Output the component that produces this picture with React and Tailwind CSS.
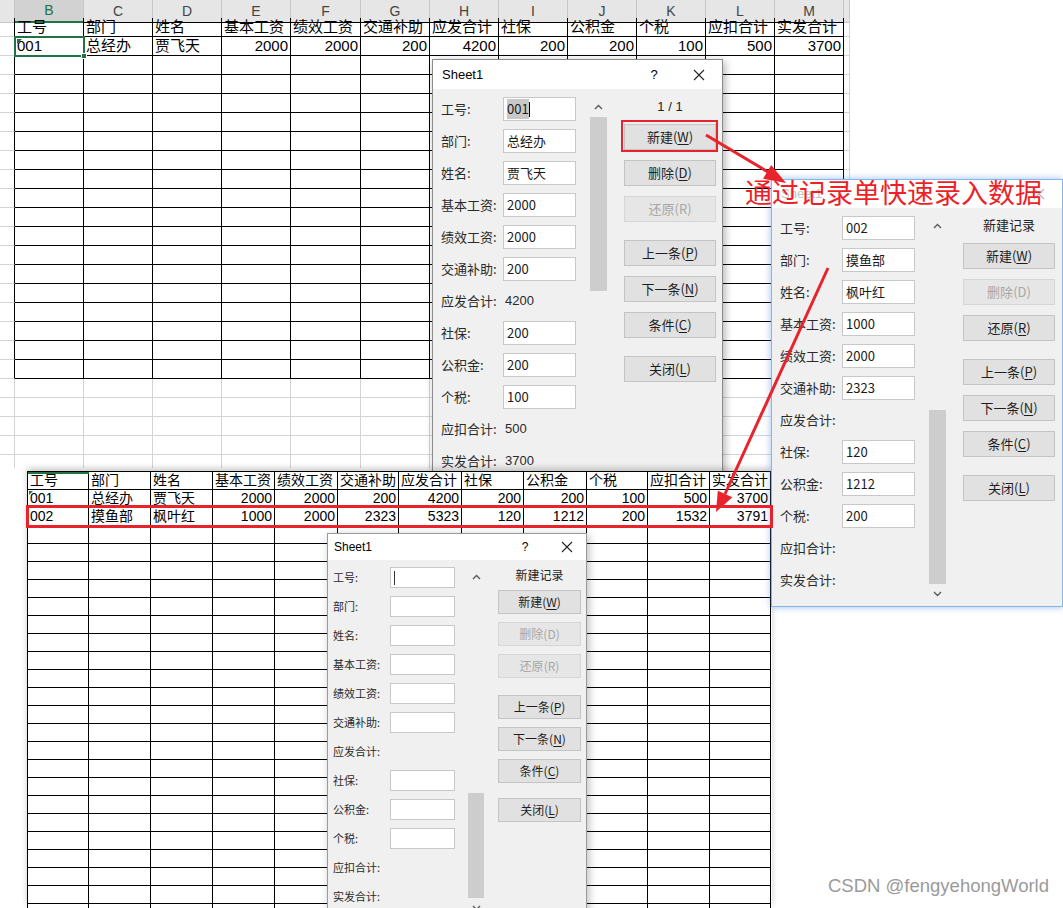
import React from 'react';

const SANS = "font-[family-name:'Liberation_Sans','Noto_Sans_CJK_SC',sans-serif]";
const CJK = "font-[family-name:'Noto_Sans_CJK_SC',sans-serif]";

const topCols = ['B', 'C', 'D', 'E', 'F', 'G', 'H', 'I', 'J', 'K', 'L', 'M'];
const heads = ['工号', '部门', '姓名', '基本工资', '绩效工资', '交通补助', '应发合计', '社保', '公积金', '个税', '应扣合计', '实发合计'];
const rec1 = ['001', '总经办', '贾飞天', '2000', '2000', '200', '4200', '200', '200', '100', '500', '3700'];
const rec2 = ['002', '摸鱼部', '枫叶红', '1000', '2000', '2323', '5323', '120', '1212', '200', '1532', '3791'];
const empty = ['', '', '', '', '', '', '', '', '', '', '', ''];

const TOP_GRID = 'grid grid-cols-[15px_69px_69px_69px_69px_70px_69px_69px_69px_69px_69px_69px_69px_6px]';
const BOT_GRID = 'grid grid-cols-[61px_62px_62px_62px_63px_61px_63px_62px_63px_61px_62px_61px]';

const calc = [6, 10, 11];
const buttons = [['新建', 'W'], ['删除', 'D'], ['还原', 'R'], ['上一条', 'P'], ['下一条', 'N'], ['条件', 'C'], ['关闭', 'L']];
const gapsLg = ['mt-[7px]', 'mt-[10px]', 'mt-[10px]', 'mt-[18px]', 'mt-[10px]', 'mt-[10px]', 'mt-[18px]'];
const gapsSm = ['mt-[5px]', 'mt-[8px]', 'mt-[8px]', 'mt-[17px]', 'mt-[8px]', 'mt-[8px]', 'mt-[15px]'];

function TopSheet() {
  return (
    <div className={`absolute left-0 top-0 w-[850px] h-[468px] overflow-hidden bg-white text-[15px] text-black ${SANS}`}>
      <div className={`${TOP_GRID} h-[18px] text-[14px] text-[#444]`}>
        <div className="bg-[#e6e6e6] border-r border-b border-[#c6c6c6]" />
        {topCols.map((c, i) => (
          <div
            key={c}
            className={i === 0
              ? 'flex items-center justify-center bg-[#d2d2d2] border-r border-[#c6c6c6] border-b-2 border-b-[#217346] text-[#217346]'
              : 'flex items-center justify-center bg-[#e6e6e6] border-r border-[#c6c6c6] border-b border-b-black'}
          >
            {c}
          </div>
        ))}
        <div className="bg-[#e6e6e6] border-b border-r border-[#c6c6c6]" />
      </div>
      {Array.from({ length: 24 }, (_, r) => {
        const boxed = r < 19;
        const vals = r === 0 ? heads : r === 1 ? rec1 : empty;
        return (
          <div key={r} className={`${TOP_GRID} h-[19px]`}>
            <div className={boxed ? 'border-b border-b-[#d4d4d4] border-r border-r-black' : 'border-b border-r border-[#d4d4d4]'} />
            {topCols.map((c, i) => (
              <div
                key={c}
                className={`flex items-center overflow-hidden whitespace-nowrap px-[2px] border-r border-b ${boxed ? 'border-black' : 'border-[#d4d4d4]'} ${r === 1 && i > 2 ? 'justify-end' : ''}`}
              >
                {vals[i]}
              </div>
            ))}
            <div className="border-b border-r border-[#d4d4d4]" />
          </div>
        );
      })}
      {/* active cell B2 */}
      <div className="absolute left-[14px] top-[36px] w-[71px] h-[21px] border-2 border-[#217346]">
        <div className="absolute -right-[4px] -bottom-[4px] w-[6px] h-[6px] bg-[#217346] border border-white" />
      </div>
      <div className="absolute left-[17px] top-[39px] w-0 h-0 border-t-[5px] border-r-[5px] border-t-[#217346] border-r-transparent" />
    </div>
  );
}

function BottomSheet() {
  return (
    <div className={`absolute left-[27px] top-[471px] w-[745px] h-[437px] overflow-hidden bg-white border-l border-t border-black shadow-[0_-3px_6px_rgba(0,0,0,0.2)] text-[14px] text-black ${SANS}`}>
      {Array.from({ length: 25 }, (_, r) => {
        const vals = r === 0 ? heads : r === 1 ? rec1 : r === 2 ? rec2 : empty;
        return (
          <div key={r} className={`${BOT_GRID} h-[18px]`}>
            {vals.map((v, i) => (
              <div
                key={i}
                className={`flex items-center overflow-hidden whitespace-nowrap px-[2px] border-r border-b border-black ${r > 0 && i > 2 ? 'justify-end' : ''}`}
              >
                {v}
              </div>
            ))}
          </div>
        );
      })}
      <div className="absolute left-0 top-0 w-[61px] h-[2px] bg-[#217346]" />
      <div className="absolute left-[1px] top-[19px] w-0 h-0 border-t-[4px] border-r-[4px] border-t-[#217346] border-r-transparent" />
    </div>
  );
}

function Chev({ down }) {
  return (
    <svg width="9" height="6" viewBox="0 0 9 6">
      <polyline points={down ? '1,1 4.5,4.5 8,1' : '1,5 4.5,1.5 8,5'} fill="none" stroke="#5a5a5a" strokeWidth="1.4" />
    </svg>
  );
}

function Btn({ sm, text, hot, off, gap }) {
  return (
    <div
      className={`${gap} ${sm ? 'h-[24px] text-[12px]' : 'h-[26px] text-[13px]'} flex items-center justify-center border ${off ? 'bg-[#e6e6e6] border-[#d6d6d6] text-[#a6a6a6]' : 'bg-[#e1e1e1] border-[#c4c4c4] text-[#1e1e1e]'}`}
    >
      {text}({off ? hot : <span className="underline underline-offset-2">{hot}</span>})
    </div>
  );
}

function Dialog({ sm, className, titleClass, faint, counter, values, thumbBottom, disabled, first }) {
  const gaps = sm ? gapsSm : gapsLg;
  return (
    <div className={`absolute flex flex-col overflow-hidden bg-[#f0f0f0] border ${CJK} ${className}`}>
      <div className={`${titleClass} shrink-0 flex items-center bg-white ${sm ? 'pl-[6px]' : 'pl-[9px]'} ${faint ? 'text-[#c4c4c4]' : 'text-black'}`}>
        <span className={`${SANS} ${sm ? 'text-[12px]' : 'text-[13px]'}`}>Sheet1</span>
        <span className={`ml-auto w-[16px] text-center ${SANS} ${sm ? 'text-[12px] mr-[15px]' : 'text-[13px] mr-[14px]'}`}>{faint ? '' : '?'}</span>
        <div className={`${sm ? 'w-[38px]' : 'w-[46px]'} flex items-center justify-center`}>
          <svg width="12" height="12" viewBox="0 0 12 12">
            <path d="M1 1L11 11M11 1L1 11" stroke={faint ? '#b4b4b4' : '#222'} strokeWidth="1.1" />
          </svg>
        </div>
      </div>
      <div className={`flex ${sm ? 'pl-[5px] pt-[7px]' : 'pl-[8px] pt-[8px]'}`}>
        <div className={`${sm ? 'w-[122px]' : 'w-[135px]'} shrink-0 flex flex-col gap-[8px]`}>
          {heads.map((f, i) => (
            <div key={f} className={`flex items-center ${sm ? 'h-[21px]' : 'h-[24px]'}`}>
              <span className={`${sm ? 'w-[57px] text-[11px]' : 'w-[62px] text-[13px]'} shrink-0 whitespace-nowrap text-[#2a2a2a]`}>{f}:</span>
              {calc.includes(i) ? (
                <span className={`pl-[2px] text-[#2a2a2a] ${SANS} ${sm ? 'text-[12px]' : 'text-[13px]'}`}>{values[i]}</span>
              ) : (
                <div className={`${sm ? 'w-[65px] h-[21px] text-[12px]' : 'w-[73px] h-[24px] text-[13px]'} shrink-0 flex items-center pl-[3px] bg-white border border-[#c8c8c8] text-[#1a1a1a] whitespace-nowrap`}>
                  {i === 0 && first === 'select' ? (
                    <>
                      <span className="bg-[#c8c8c8]">{values[i]}</span>
                      <span className="w-px h-[15px] bg-black" />
                    </>
                  ) : i === 0 && first === 'caret' ? (
                    <span className="w-px h-[14px] bg-[#333]" />
                  ) : (
                    values[i]
                  )}
                </div>
              )}
            </div>
          ))}
        </div>
        <div className={`${sm ? 'ml-[13px] w-[16px] h-[351px]' : 'ml-[14px] w-[17px] h-[388px]'} shrink-0 flex flex-col`}>
          <div className="h-[20px] shrink-0 flex items-center justify-center">
            <Chev />
          </div>
          <div className="flex-1 flex flex-col">
            {thumbBottom && <div className="flex-1" />}
            <div className={`${sm ? 'h-[105px]' : 'h-[174px]'} bg-[#cdcdcd]`} />
            {!thumbBottom && <div className="flex-1" />}
          </div>
          <div className="h-[20px] shrink-0 flex items-center justify-center">
            <Chev down />
          </div>
        </div>
        <div className={`${sm ? 'ml-[14px] w-[83px]' : 'ml-[17px] w-[92px]'} shrink-0 flex flex-col`}>
          <div className={`${sm ? 'h-[18px] text-[12px]' : 'h-[20px] text-[13px]'} flex items-center justify-center text-[#222] ${SANS}`}>{counter}</div>
          {buttons.map(([t, k], i) => (
            <Btn key={t} sm={sm} text={t} hot={k} off={disabled.includes(i)} gap={gaps[i]} />
          ))}
        </div>
      </div>
    </div>
  );
}

export default function App() {
  return (
    <div className="relative w-[1063px] h-[908px] overflow-hidden bg-white">
      <TopSheet />
      <Dialog
        className="left-[432px] top-[59px] w-[291px] h-[427px] border-[#8c8c8c] shadow-[2px_2px_8px_rgba(0,0,0,0.3)]"
        titleClass="h-[29px]"
        counter="1 / 1"
        values={rec1}
        disabled={[2]}
        first="select"
      />
      <BottomSheet />
      <Dialog
        sm
        className="left-[327px] top-[533px] w-[260px] h-[380px] border-[#9a9a9a] shadow-[2px_2px_8px_rgba(0,0,0,0.25)]"
        titleClass="h-[26px]"
        counter="新建记录"
        values={empty}
        thumbBottom
        disabled={[1, 2]}
        first="caret"
      />
      <Dialog
        className="left-[771px] top-[179px] w-[292px] h-[428px] border-[#86b6ea] shadow-[0_0_7px_rgba(70,140,225,0.55)]"
        titleClass="h-[28px]"
        faint
        counter="新建记录"
        values={rec2.map((v, i) => (calc.includes(i) ? '' : v))}
        thumbBottom
        disabled={[1]}
      />

      {/* annotations */}
      <div className="absolute left-[621px] top-[120px] w-[97px] h-[32px] border-2 border-[#e8232b]" />
      <div className="absolute left-[26px] top-[505px] w-[747px] h-[23px] border-[3px] border-[#e8232b]" />
      <svg className="absolute left-0 top-0 pointer-events-none" width="1063" height="908" viewBox="0 0 1063 908">
        <line x1="706" y1="135" x2="768" y2="172" stroke="#e8232b" strokeWidth="3" />
        <polygon points="786,183 763,178.7 771.2,164.9" fill="#e8232b" />
        <line x1="828" y1="268" x2="725" y2="494" stroke="#e8232b" strokeWidth="3" />
        <polygon points="716,512 732.4,497.3 717.8,490.7" fill="#e8232b" />
      </svg>
      <div className={`absolute left-[745px] top-[178px] text-[27px] leading-none whitespace-nowrap text-[#ee1f28] ${CJK}`}>
        通过记录单快速录入数据
      </div>
      <div className={`absolute left-[828px] top-[877px] text-[18.5px] leading-none whitespace-nowrap text-[#9a9a9a] ${SANS}`}>
        CSDN @fengyehongWorld
      </div>
    </div>
  );
}
